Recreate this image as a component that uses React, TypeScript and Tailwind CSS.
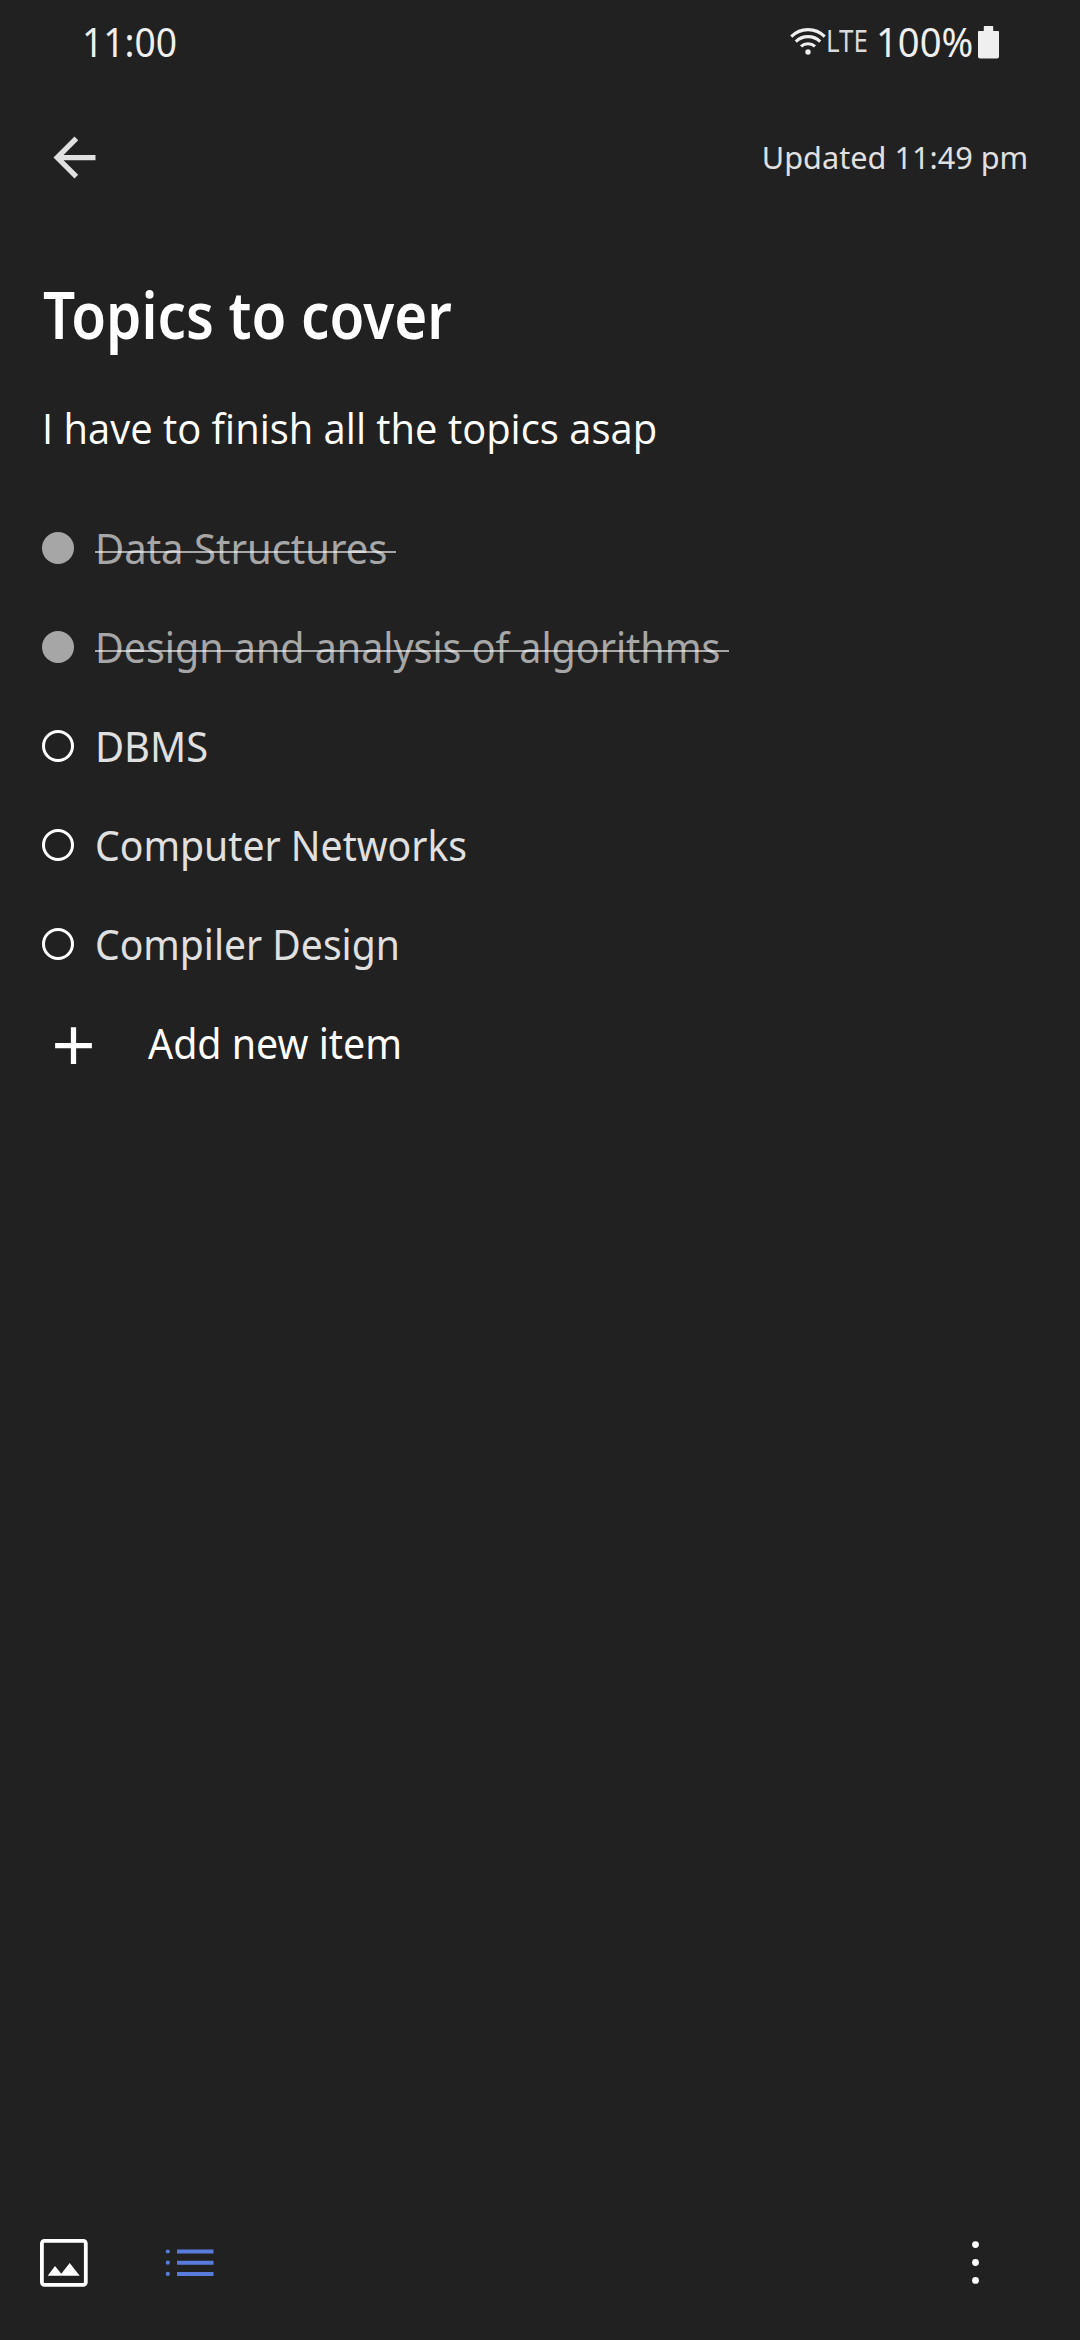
type Topic = {
  label: string;
  done?: boolean;
  textClass: string;
  lineClass?: string;
};

const topics: Topic[] = [
  { label: "Data Structures", done: true, textClass: "scale-x-[0.96]", lineClass: "w-[301px]" },
  {
    label: "Design and analysis of algorithms",
    done: true,
    textClass: "scale-x-[0.945]",
    lineClass: "w-[634px]",
  },
  { label: "DBMS", textClass: "scale-x-[0.957]" },
  { label: "Computer Networks", textClass: "scale-x-[0.939]" },
  { label: "Compiler Design", textClass: "scale-x-[0.937]" },
];

function StatusBar() {
  return (
    <header className="flex h-[84px] items-center text-[39.2px] leading-none text-[#efefef]">
      <span className="ml-[82px] origin-left scale-x-[0.949]">11:00</span>
      <div className="ml-auto mr-[81px] flex h-full items-center">
        <svg className="mt-[-3px] h-7 w-9" viewBox="0 0 36 28" fill="none" stroke="currentColor" strokeWidth="3.1">
          <path d="M1.300 9.600C10.500 0.300 25.500 0.300 34.700 9.600" />
          <path d="M5.800 14.600C12.500 8 23.500 8 30.200 14.600" />
          <path d="M11 19.400C15 15.800 21 15.800 25 19.400" />
          <circle cx="18" cy="25" r="2.700" fill="currentColor" stroke="none" />
        </svg>
        <span className="mt-[-3px] w-[50px] origin-left scale-x-[0.843] text-[30.8px] text-[#dadada]">LTE</span>
        <span className="w-[102px] origin-left scale-x-[0.974]">100%</span>
        <svg className="h-[33px] w-[21px]" viewBox="0 0 21 33" fill="currentColor">
          <path d="M6.800 0h7.400c.6 0 1 .4 1 1v4H20c.6 0 1 .4 1 1v24.500c0 1.200-.8 2-2 2H2c-1.200 0-2-.8-2-2V6c0-.6.4-1 1-1h4.800V1c0-.6.4-1 1-1z" />
        </svg>
      </div>
    </header>
  );
}

function TopicRow({ topic }: { topic: Topic }) {
  return (
    <li className="flex h-[98px] items-center">
      <span
        className={
          topic.done
            ? "h-8 w-8 rounded-full bg-[#a6a6a6]"
            : "h-8 w-8 rounded-full border-[3px] border-white"
        }
      />
      <span className="relative ml-[21px] flex h-full items-center">
        <span
          className={`origin-left whitespace-nowrap ${topic.done ? "text-[#a6a6a6]" : "text-[#e0e0e0]"} ${topic.textClass}`}
        >
          {topic.label}
        </span>
        {topic.done && <span className={`absolute left-0 top-[52px] h-[2px] bg-white/60 ${topic.lineClass}`} />}
      </span>
    </li>
  );
}

export default function App() {
  return (
    <div className="flex h-[2340px] w-[1080px] flex-col overflow-hidden bg-[#212121] font-['Noto_Sans',sans-serif] text-white">
      <StatusBar />

      <nav className="flex h-[146px] items-center justify-between pl-[43px] pr-[52px]">
        <svg className="h-[63px] w-[63px] text-[#e0e0e0]" viewBox="0 0 24 24" fill="currentColor">
          <path d="M20 11H7.830l5.590-5.590L12 4l-8 8 8 8 1.410-1.410L7.830 13H20v-2z" />
        </svg>
        <span className="origin-right scale-x-[0.968] text-[31.7px] text-[#e0e0e0]">Updated 11:49 pm</span>
      </nav>

      <main className="flex flex-1 flex-col pl-[42px]">
        <h1 className="ml-px mt-10 h-[87px] origin-left scale-x-[0.865] whitespace-nowrap text-[65.4px] font-semibold leading-[87px]">
          Topics to cover
        </h1>
        <p className="mt-[43px] h-14 origin-left scale-x-[0.951] whitespace-nowrap font-['Open_Sans',sans-serif] text-[42px] leading-[56px]">
          I have to finish all the topics asap
        </p>
        <ul className="mt-[43px] flex flex-col gap-px text-[41.7px] leading-none">
          {topics.map((t) => (
            <TopicRow key={t.label} topic={t} />
          ))}
          <li className="flex h-[98px] items-center">
            <svg className="mt-[5px] h-[63px] w-[63px]" viewBox="0 0 24 24" fill="currentColor">
              <path d="M19 13h-6v6h-2v-6H5v-2h6V5h2v6h6v2z" />
            </svg>
            <span className="ml-[43px] origin-left scale-x-[0.944]">Add new item</span>
          </li>
        </ul>
      </main>

      <footer className="flex h-[154px] items-center pl-10 pr-[100px]">
        <svg className="h-12 w-12" viewBox="0 0 48 48">
          <rect x="1.900" y="1.900" width="43.900" height="43.900" rx="2.500" fill="none" stroke="white" strokeWidth="3.800" />
          <path d="M7.700 36.700 15 27l6.300 7.700L29.700 24l10 12.700z" fill="white" />
        </svg>
        <svg className="ml-[77px] h-8 w-[50px] text-[#587bdc]" viewBox="0 0 50 32" fill="currentColor">
          <circle cx="2.800" cy="4.500" r="2.100" />
          <circle cx="2.800" cy="15.700" r="2.100" />
          <circle cx="2.800" cy="26.900" r="2.100" />
          <path d="M12 2.500h36.500v4H12zM12 13.700h36.500v4H12zM12 24.900h36.500v4H12z" />
        </svg>
        <svg className="ml-auto h-11 w-[9px]" viewBox="0 0 9 44" fill="white">
          <circle cx="4.500" cy="3.600" r="3.400" />
          <circle cx="4.500" cy="21.500" r="3.400" />
          <circle cx="4.500" cy="39.400" r="3.400" />
        </svg>
      </footer>
    </div>
  );
}
